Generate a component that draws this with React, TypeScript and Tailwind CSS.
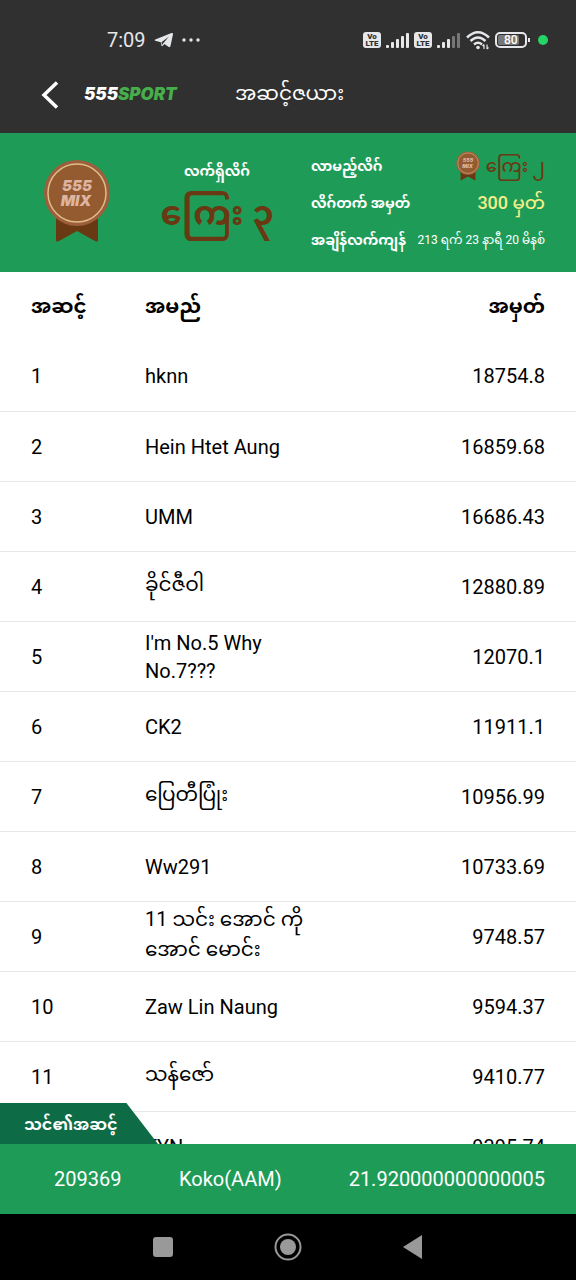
const players = [
  { rank: 1, name: "hknn", points: "18754.8" },
  { rank: 2, name: "Hein Htet Aung", points: "16859.68" },
  { rank: 3, name: "UMM", points: "16686.43" },
  { rank: 4, name: "ခိုင်ဇီဝါ", points: "12880.89" },
  { rank: 5, name: "I'm No.5 Why No.7???", points: "12070.1" },
  { rank: 6, name: "CK2", points: "11911.1" },
  { rank: 7, name: "ပြေတီပြုံး", points: "10956.99" },
  { rank: 8, name: "Ww291", points: "10733.69" },
  { rank: 9, name: "11 သင်း အောင် ကို အောင် မောင်း", points: "9748.57" },
  { rank: 10, name: "Zaw Lin Naung", points: "9594.37" },
  { rank: 11, name: "သန်ဇော်", points: "9410.77" },
  { rank: 12, name: "TYN", points: "9395.74" },
];

// Burmese marks hang below the baseline, so those names need a taller line
const isBurmese = (text: string) => /[\u1000-\u109f]/.test(text);

const VoLte = () => (
  <div className="flex h-4 w-[18px] flex-col justify-center rounded-[3px] bg-gray-200 text-center text-[8px] leading-[7px] font-black text-[#303030]">
    <span>Vo</span>
    <span>LTE</span>
  </div>
);

const Signal = ({ strength }: { strength: number }) => (
  <svg width="25" height="16" viewBox="0 0 25 16" aria-hidden="true">
    {[3, 6, 9, 12, 15].map((h, i) => (
      <rect key={h} x={i * 5 + 1} y={16 - h} width="3" height={h} rx="1" fill={i < strength ? "#e8e8e8" : "#777777"} />
    ))}
  </svg>
);

const Medal = ({ className }: { className: string }) => (
  <svg viewBox="0 0 68 84" className={className} aria-hidden="true">
    <path d="M13 54H55V81Q55 84 52 82L34 72L16 82Q13 84 13 81Z" fill="#693913" />
    <circle cx="34" cy="34" r="33" fill="#9d5e3d" />
    <circle cx="34" cy="34" r="29" fill="#945b30" stroke="#e0bd88" strokeWidth="1.5" />
    <g fill="#dfb5a0" fontFamily="Inter, sans-serif" fontWeight="900" fontStyle="italic" fontSize="15" textAnchor="middle">
      <text x="34" y="32">555</text>
      <text x="33" y="47">MIX</text>
    </g>
  </svg>
);

const StatusBar = () => (
  <div className="flex h-10 items-end justify-between pr-7 pl-[107px] text-gray-200">
    <div className="flex h-6 items-center gap-2">
      <span className="text-xl leading-6">7:09</span>
      <svg width="20" height="16" viewBox="0 0 20 16" fill="currentColor" aria-hidden="true">
        <path d="M1.200 7.500L17.500 1Q19.200 0.600 19 2.200L16.500 14Q16 15.800 14.400 14.800L10.500 12L8.500 14Q7.500 14.500 7.300 13L6.800 10.300L1.200 8.800Q0 8.200 1.200 7.500Z" />
        <path d="M7.500 10.300L15 4.500L9.500 11L8 13Z" fill="#303030" />
      </svg>
      <svg width="18" height="4" viewBox="0 0 18 4" fill="currentColor" aria-hidden="true">
        <circle cx="2" cy="2" r="1.700" />
        <circle cx="9" cy="2" r="1.700" />
        <circle cx="16" cy="2" r="1.700" />
      </svg>
    </div>
    <div className="flex h-6 items-center gap-1">
      <VoLte />
      <Signal strength={5} />
      <VoLte />
      <Signal strength={3} />
      <svg width="26" height="20" viewBox="0 0 26 20" fill="none" stroke="currentColor" strokeWidth="2.500" aria-hidden="true">
        <path d="M2 7.500Q13 -3 24 7.500M5.500 11Q13 4 20.500 11M9 14.500Q13 11 17 14.500" />
        <circle cx="13" cy="17.500" r="1.800" fill="currentColor" stroke="none" />
        <path d="M19 19V14.500M17.500 16L19 14.500M22 14.500V19M23.500 17.500L22 19" strokeWidth="1.200" />
      </svg>
      <div className="flex items-center gap-px">
        <div className="h-4 w-8 rounded-[5px] border-2 border-gray-200 p-px">
          <div className="h-full w-4/5 rounded-xs bg-[#777777] pl-1.5 text-xs leading-[11px] font-medium text-white">80</div>
        </div>
        <div className="h-1 w-0.5 bg-gray-200" />
      </div>
      <div className="ml-1 size-2.5 rounded-full bg-[#25d366]" />
    </div>
  </div>
);

const App = () => {
  return (
    <div className="flex h-screen flex-col overflow-hidden bg-white font-[Roboto,'Noto_Sans_Myanmar','Noto_Sans',sans-serif] text-black">
      <header className="h-[133px] shrink-0 bg-[#303030] pt-3 text-white">
        <StatusBar />
        <div className="flex h-[81px] items-center pt-1">
          <button type="button" aria-label="Back" className="ml-8 flex h-10 w-9 items-center justify-center">
            <svg width="18" height="28" viewBox="0 0 18 28" fill="none" stroke="currentColor" strokeWidth="3.500" aria-hidden="true">
              <path d="M16 1.500L3 14L16 26.500" />
            </svg>
          </button>
          <span className="ml-4 w-[151px] font-[Inter,sans-serif] text-[17px] font-black italic">
            555<span className="text-[#46ae4b]">SPORT</span>
          </span>
          <h1 className="pb-1 text-xl">အဆင့်ဇယား</h1>
        </div>
      </header>

      {/* League summary */}
      <section className="flex h-[139px] shrink-0 items-center bg-[#1e9c57] pr-[31px] text-white">
        <Medal className="mb-1 ml-[43px] h-[84px] w-[68px]" />
        <div className="flex flex-1 flex-col items-center pl-3 pb-3">
          <h2 className="text-sm leading-8 font-bold">လက်ရှိလိဂ်</h2>
          <p className="text-[34px] leading-[52px] font-bold text-[#693913]">ကြေး ၃</p>
        </div>
        <dl className="w-[234px] text-sm font-bold">
          <div className="flex h-[37px] items-center justify-between">
            <dt>လာမည့်လိဂ်</dt>
            <dd className="flex items-center gap-1.5 text-lg font-medium text-[#693913]">
              <Medal className="h-[30px] w-6" />
              ကြေး ၂
            </dd>
          </div>
          <div className="flex h-[37px] items-center justify-between">
            <dt>လိဂ်တက် အမှတ်</dt>
            <dd className="text-lg font-medium text-[#f4ef8b]">300 မှတ်</dd>
          </div>
          <div className="flex h-[37px] items-center justify-between whitespace-nowrap">
            <dt>အချိန်လက်ကျန်</dt>
            <dd className="text-xs font-normal">213 ရက် 23 နာရီ 20 မိနစ်</dd>
          </div>
        </dl>
      </section>

      {/* Ranking */}
      <main className="min-h-0 flex-1 overflow-hidden">
        <table className="w-full table-fixed text-left text-xl leading-7">
          <thead>
            <tr className="h-[69px]">
              <th className="w-[25%] pb-0.5 pl-[31px]">အဆင့်</th>
              <th className="w-[30%] pb-0.5 pl-px">အမည်</th>
              <th className="pr-[31px] pb-0.5 text-right">အမှတ်</th>
            </tr>
          </thead>
          <tbody>
            {players.map((player) => (
              <tr key={player.rank} className="h-[70px] border-b border-gray-200">
                <td className="pt-px pl-[31px]">{player.rank}</td>
                <td className={isBurmese(player.name) ? "pb-1 pl-px leading-[30px]" : "pt-px pl-px"}>{player.name}</td>
                <td className="pt-px pr-[31px] text-right">{player.points}</td>
              </tr>
            ))}
          </tbody>
        </table>
      </main>

      {/* Own rank */}
      <section className="relative flex h-[70px] shrink-0 items-center bg-[#1e9c57] pr-[31px] pl-[54px] text-xl text-white">
        <h2 className="absolute bottom-full left-0 flex h-[41px] w-[158px] items-center bg-[#0d6b45] pt-0.5 pl-6 text-base font-bold [clip-path:polygon(0_0,80%_0,100%_100%,0_100%)]">
          သင်၏အဆင့်
        </h2>
        <span className="w-[125px]">209369</span>
        <span>Koko(AAM)</span>
        <span className="ml-auto">21.920000000000005</span>
      </section>

      <nav className="flex h-[66px] shrink-0 items-center justify-center gap-[97px] bg-black text-[#999999]">
        <button type="button" aria-label="Recent apps" className="flex size-7 items-center justify-center">
          <span className="size-5 rounded-[3px] bg-[#999999]" />
        </button>
        <button type="button" aria-label="Home">
          <svg width="28" height="28" viewBox="0 0 28 28" aria-hidden="true">
            <circle cx="14" cy="14" r="12.500" fill="none" stroke="currentColor" strokeWidth="2" />
            <circle cx="14" cy="14" r="8" fill="currentColor" />
          </svg>
        </button>
        <button type="button" aria-label="Back" className="flex size-7 items-center justify-center">
          <svg width="20" height="24" viewBox="0 0 20 24" aria-hidden="true">
            <path d="M19 0V24L0 12Z" fill="currentColor" />
          </svg>
        </button>
      </nav>
    </div>
  );
};

export default App;
